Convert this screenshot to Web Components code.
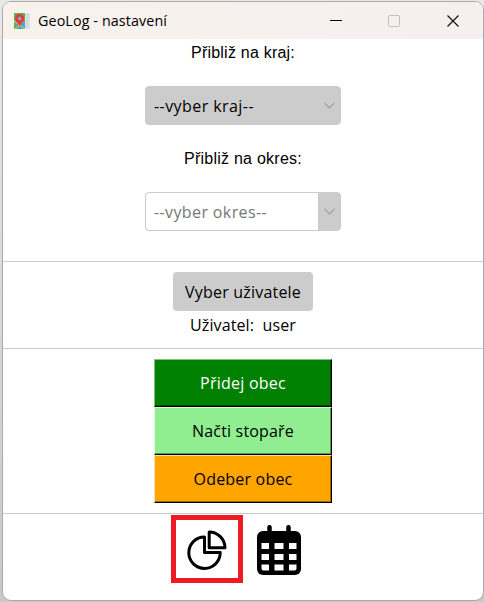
<!DOCTYPE html>
<html lang="cs"><head><meta charset="utf-8"><title>GeoLog - nastavení</title>
<style>html,body{margin:0;height:100%;background:linear-gradient(#e8e8e8,#c8c8c8);overflow:hidden}</style></head>
<body>
<geo-window></geo-window>
<script>
const define=(name,html,after)=>customElements.define(name,class extends HTMLElement{
  connectedCallback(){
    if(this.shadowRoot)return;
    const t=document.createElement('template');t.innerHTML=html;
    this.attachShadow({mode:'open'}).append(t.content.cloneNode(true));
    if(after)after(this);
  }
});
// Text run whose tracking is adjusted to the width given in "fit".
define('fit-text',`<style>:host{display:inline-block;white-space:pre;line-height:22px}span{display:inline-block}</style><span><slot></slot></span>`,el=>{
  const s=el.shadowRoot.querySelector('span'),w=+el.getAttribute('fit');
  const extra=(w-s.getBoundingClientRect().width)/(el.textContent.length);
  s.style.letterSpacing=extra.toFixed(3)+'px';
});
define('title-bar',`<style>
:host{display:flex;height:37px;background:linear-gradient(90deg,#f7f2ec,#f5f0ef);align-items:center;box-sizing:border-box;padding:0 1px 0 10px;font-size:14.3px}
.t{flex:1;padding-left:7px}.b{width:58.5px;display:flex;justify-content:center}
svg{display:block}
</style>
<svg width="18" height="18" viewBox="0 0 18 18"><path fill="#dde4ea" d="M11 1h6v16h-6z"/><path stroke="#aebdca" stroke-dasharray="1.5 1" d="M13 3h3M13 6h3M13 9h3M13 12h3M13 15h3"/><path fill="#62b04d" d="M1 1h11v16H1z"/><path fill="#4aa6cf" d="M1 11l6-3 5 3v6H8z"/><path stroke="#e8d26c" d="M1 9l11 8M2 17l8-7"/><path fill="#e9393b" d="M6.700 2a4.600 4.600 0 0 0-4.600 4.600c0 3 3 4.700 4.600 7.800 1.600-3.100 4.600-4.800 4.600-7.800A4.600 4.600 0 0 0 6.700 2z"/><circle cx="6.700" cy="6.500" r="1.800" fill="#67b8dc"/></svg>
<div class="t"><fit-text fit="129">GeoLog - nastavení</fit-text></div>
<div class="b"><svg width="12" height="12"><path d="M0 5.500h12" stroke="#000"/></svg></div>
<div class="b"><svg width="12" height="12"><rect x=".5" y=".5" width="11" height="11" rx="1" fill="none" stroke="#c3bfbc"/></svg></div>
<div class="b"><svg width="12" height="12"><path d="M.5.500l11 11M11.500.500l-11 11" stroke="#111" stroke-width="1.200"/></svg></div>`);
define('combo-box',`<style>
:host{display:flex;box-sizing:border-box;width:196px;height:39px;border-radius:4px;background:#ccc;border:1px solid #ccc;color:#000;overflow:hidden}
.v{flex:1;padding-left:8px;display:flex;align-items:center}
.a{width:22px;display:flex;align-items:center;justify-content:center}
:host([off]) .v{background:#fff;color:#777;border-radius:3px 0 0 3px}
</style><div class="v"><slot></slot></div><div class="a"><svg width="12" height="7"><path d="M1.500 1l5 4.800 5-4.800" fill="none" stroke="#808080"/></svg></div>`);
define('flat-button',`<style>:host{display:flex;width:140px;height:39px;border-radius:4px;background:#ccc;align-items:center;justify-content:center}</style><slot></slot>`);
define('raised-button',`<style>
:host{display:flex;box-sizing:border-box;width:178px;height:48px;align-items:center;justify-content:center;background:var(--face);color:var(--ink,#000);border:1px solid;border-color:var(--light) #000 #000 var(--light);box-shadow:inset -1px -1px var(--dark)}
</style><slot></slot>`);
define('section-box',`<style>:host{display:flex;flex-direction:column;align-items:center;box-sizing:border-box;border-bottom:1px solid #ccc}</style><slot></slot>`);
define('pie-icon',`<style>:host{display:block;box-sizing:border-box;width:72px;height:68px;border:5px solid #ed1c24}svg{display:block}</style>
<svg width="62" height="58" viewBox="176 520 62 58" fill="none" stroke="#000" stroke-width="3" stroke-linejoin="round"><path d="M204.500 537A15.700 15.700 0 1 0 220.200 552.500H204.500z"/><path d="M209.200 532A16 16 0 0 1 225 547.800H209.200z"/></svg>`);
define('calendar-icon',`<style>:host{display:block;width:44px;height:50px}svg{display:block}</style>
<svg width="44" height="50" viewBox="0 0 44 50"><rect y="6" width="44" height="44" rx="6"/><path d="M12.500 2.200v8M31.500 2.200v8" stroke="#000" stroke-width="4.500" stroke-linecap="round"/><path fill="#fff" d="M4.500 18h7.500v6H4.500zM17.500 18h9v6h-9zM32 18h7.500v6H32zM4.500 29h7.500v6H4.500zM17.500 29h9v6h-9zM32 29h7.500v6H32zM4.500 39.500h7.500v6H6.500q-2 0-2-2zM17.500 39.500h9v6h-9zM32 39.500h7.500v4q0 2-2 2H32z"/></svg>`);
define('geo-window',`<style>
:host{display:block;box-sizing:border-box;padding:1px 0 1px 2px;height:602px;font:16px "Open Sans","Noto Sans",sans-serif;color:#000}
.w{box-sizing:border-box;width:482px;height:600px;border:1px solid #aaa;border-radius:9px;background:#fff;overflow:hidden}
.l{font-family:"Liberation Sans",Arial,sans-serif}
.z{height:223px;padding-top:3px}.z combo-box{margin:22px 0}.z combo-box[off]{margin-bottom:0}
.u{height:87px;padding-top:10px}.u .name{margin-top:3px}
.o{height:165px;padding-top:10px}
.i{display:flex;padding:1px 0 0 168px;gap:14px}.i calendar-icon{margin-top:10px}
</style><div class="w"><title-bar></title-bar>
<section-box class="z"><fit-text class="l" fit="104">Přibliž na kraj:</fit-text><combo-box><fit-text fit="100">--vyber kraj--</fit-text></combo-box><fit-text class="l" fit="118" style="margin-top:1px">Přibliž na okres:</fit-text><combo-box off><fit-text fit="113">--vyber okres--</fit-text></combo-box></section-box>
<section-box class="u"><flat-button><fit-text fit="116">Vyber uživatele</fit-text></flat-button><fit-text class="name" fit="106">Uživatel:  user</fit-text></section-box>
<section-box class="o">
<raised-button style="--face:#008000;--light:#80c080;--dark:#005000;--ink:#fff"><fit-text fit="86">Přidej obec</fit-text></raised-button>
<raised-button style="--face:#90ee90;--light:#d8ffd8;--dark:#5a965a"><fit-text fit="102">Načti stopaře</fit-text></raised-button>
<raised-button style="--face:#ffa500;--light:#ffe0a0;--dark:#a06800"><fit-text fit="99">Odeber obec</fit-text></raised-button></section-box>
<div class="i"><pie-icon></pie-icon><calendar-icon></calendar-icon></div></div>`);
</script>
</body></html>
